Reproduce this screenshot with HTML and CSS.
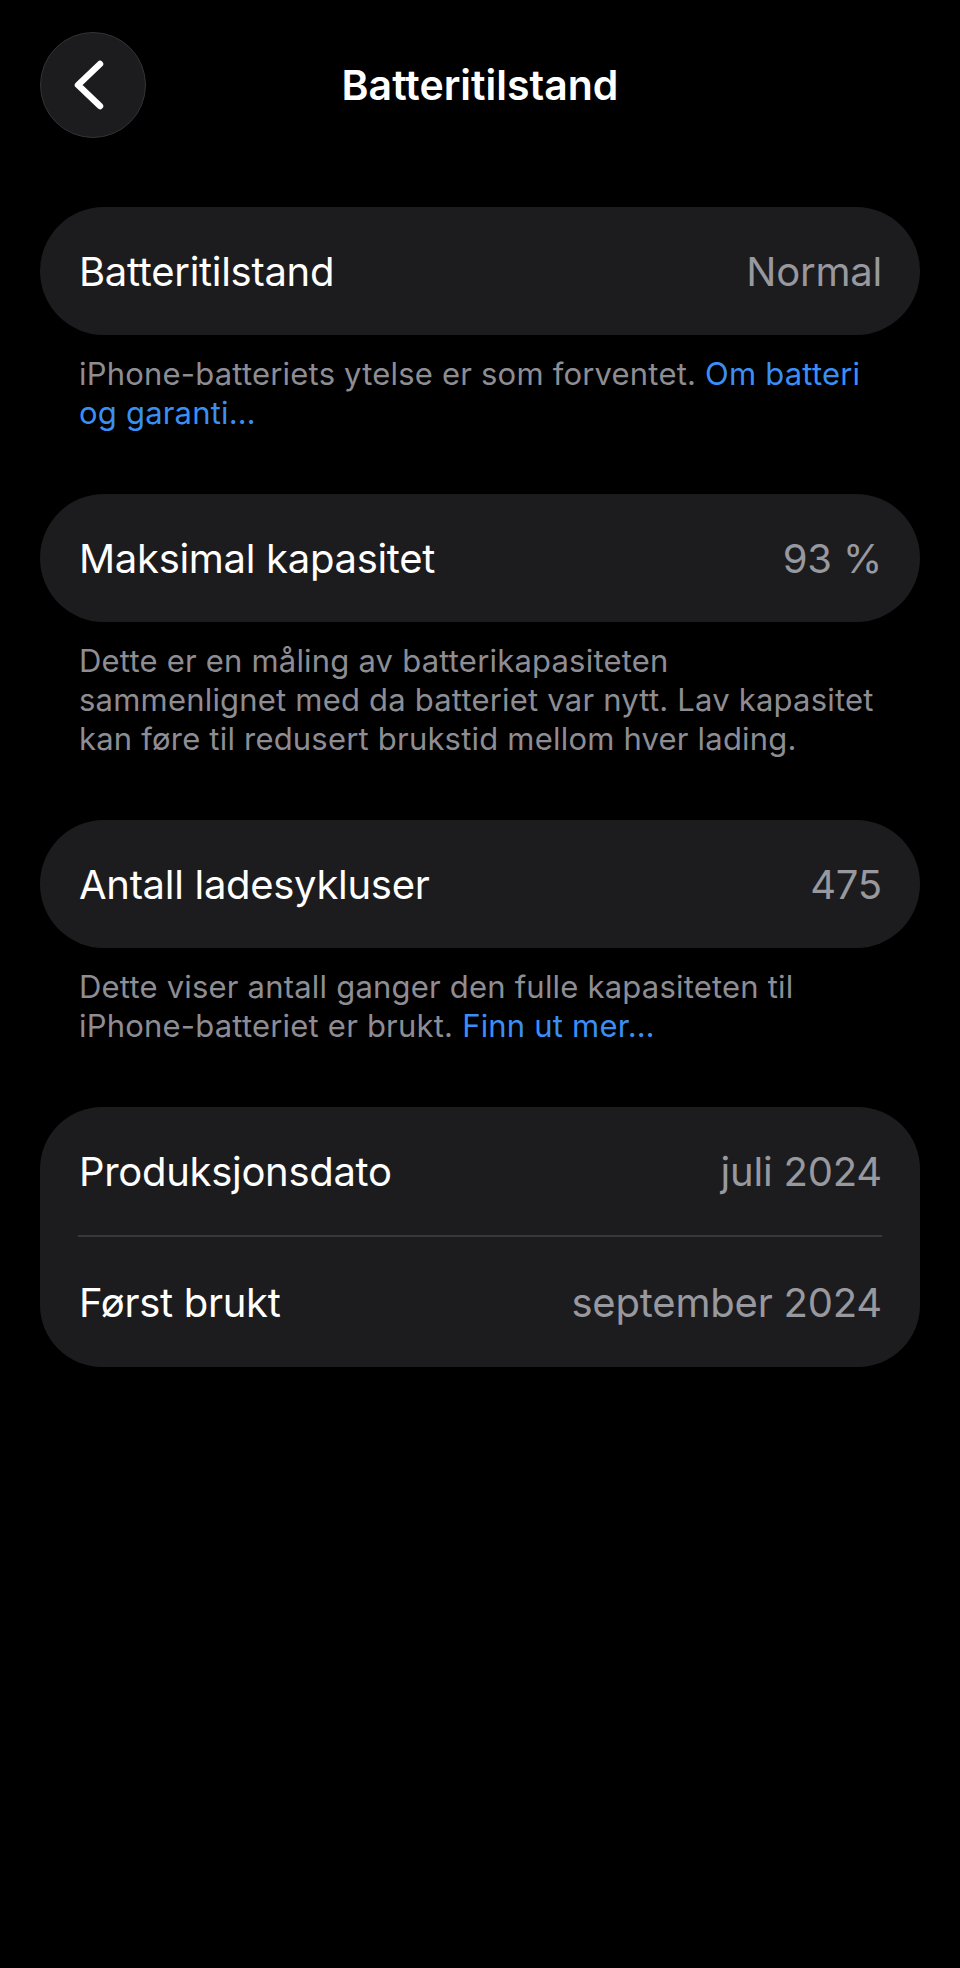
FILE: index.html
```html
<!DOCTYPE html>
<html lang="no">
<head>
<meta charset="utf-8">
<title>Batteritilstand</title>
<link rel="stylesheet" href="styles.css">
</head>
<body>
<div class="screen">
  <header class="nav">
    <button class="back" aria-label="Tilbake">
      <svg width="106" height="106" viewBox="0 0 106 106" aria-hidden="true">
        <path d="M60 32 L38 53 L60 74" fill="none" stroke="#fff" stroke-width="6.5" stroke-linecap="round" stroke-linejoin="round"/>
      </svg>
    </button>
    <h1 class="title">Batteritilstand</h1>
    <span class="spacer"></span>
  </header>

  <main class="content">
    <section class="group">
      <div class="card">
        <div class="row"><span class="label">Batteritilstand</span><span class="value">Normal</span></div>
      </div>
      <p class="note">iPhone-batteriets ytelse er som forventet. <a class="link" href="#">Om batteri og garanti…</a></p>
    </section>

    <section class="group">
      <div class="card">
        <div class="row"><span class="label">Maksimal kapasitet</span><span class="value">93 %</span></div>
      </div>
      <p class="note">Dette er en måling av batterikapasiteten sammenlignet med da batteriet var nytt. Lav kapasitet kan føre til redusert brukstid mellom hver lading.</p>
    </section>

    <section class="group">
      <div class="card">
        <div class="row"><span class="label">Antall ladesykluser</span><span class="value">475</span></div>
      </div>
      <p class="note">Dette viser antall ganger den fulle kapasiteten til <span class="nw">iPhone-batteriet</span> er brukt. <a class="link" href="#">Finn ut mer…</a></p>
    </section>

    <section class="group">
      <div class="card card-multi">
        <div class="row"><span class="label">Produksjonsdato</span><span class="value">juli 2024</span></div>
        <div class="divider"></div>
        <div class="row row-tall"><span class="label">Først brukt</span><span class="value">september 2024</span></div>
      </div>
    </section>
  </main>
</div>
</body>
</html>
```

FILE: styles.css
```css
html, body {
  margin: 0;
  padding: 0;
  background: #000;
}

body {
  font-family: Inter, "Noto Sans", "Liberation Sans", sans-serif;
  color: #fff;
  -webkit-font-smoothing: antialiased;
}

.screen {
  width: 960px;
  min-height: 1968px;
  background: #000;
}

.nav {
  display: grid;
  grid-template-columns: 106px 1fr 106px;
  align-items: center;
  padding: 32px 40px 0;
  height: 106px;
}

.back {
  width: 106px;
  height: 106px;
  padding: 0;
  margin: 0;
  border-radius: 50%;
  background: #1c1c1e;
  border: 1.5px solid #333336;
  box-sizing: border-box;
  display: flex;
  align-items: center;
  justify-content: center;
  overflow: hidden;
}

.back svg {
  display: block;
  flex: none;
}

.title {
  margin: 0;
  text-align: center;
  font-size: 41px;
  font-weight: 600;
  letter-spacing: 0;
}

.content {
  display: flex;
  flex-direction: column;
  padding: 69px 40px 0;
  gap: 62px;
}

.card {
  background: #1c1c1e;
  border-radius: 64px;
  display: flex;
  flex-direction: column;
}

.card-multi {
  border-radius: 62px;
}

.row {
  height: 128px;
  padding: 0 38px 0 39px;
  display: flex;
  align-items: center;
  justify-content: space-between;
}

.row-tall {
  height: 130px;
}

.label {
  font-size: 40px;
  letter-spacing: -0.3px;
  color: #fff;
}

.value {
  font-size: 40px;
  letter-spacing: -0.2px;
  color: #98989f;
}

.divider {
  height: 2px;
  margin: 0 38px;
  background: #38383b;
}

.note {
  margin: 19px 0 0;
  padding: 0 40px 0 39px;
  font-size: 31px;
  line-height: 39px;
  letter-spacing: 0.2px;
  color: #8d8d93;
}

.nw {
  white-space: nowrap;
}

.link {
  color: #3a8ff5;
  text-decoration: none;
}
```
